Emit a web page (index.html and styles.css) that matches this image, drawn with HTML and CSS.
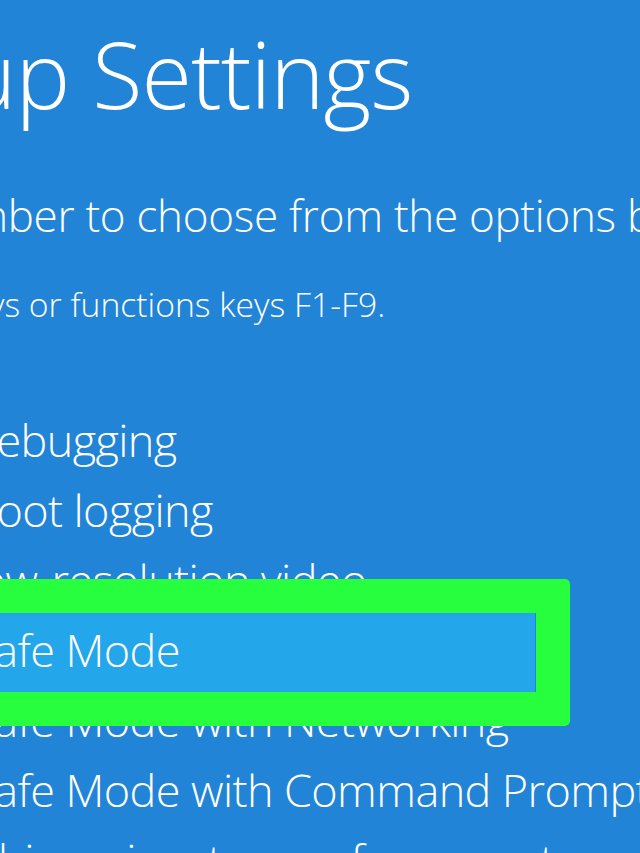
FILE: index.html
```html
<!DOCTYPE html>
<html lang="en">
<head>
  <meta charset="UTF-8" />
  <meta name="viewport" content="width=device-width, initial-scale=1.0" />
  <title>Startup Settings</title>
  <link rel="stylesheet" href="styles.css">
</head>
<body>
  <div class="screen">
    <h1 class="title">Startup Settings</h1>
    <p class="prompt">Press a number to choose from the options below:</p>
    <p class="hint">Use number keys or functions keys F1-F9.</p>
    <ol class="options">
      <li>1) Enable debugging</li>
      <li>2) Enable boot logging</li>
      <li>3) Enable low-resolution video</li>
      <li class="selected">4) Enable Safe Mode</li>
      <li>5) Enable Safe Mode with Networking</li>
      <li>6) Enable Safe Mode with Command Prompt</li>
      <li>7) Disable driver signature enforcement</li>
    </ol>
  </div>
</body>
</html>
```

FILE: styles.css
```css
html, body {
  margin: 0;
  height: 100%;
  overflow: hidden;
}
body {
  background: #2184d6;
  color: #fff;
  font-family: "Open Sans", "Noto Sans", sans-serif;
  font-weight: 300;
}
.screen {
  white-space: nowrap;
}
.title {
  font-size: 92px;
  line-height: 92px;
  font-weight: 300;
  letter-spacing: -1px;
  margin: 28px 0 0 -229px;
}
.prompt {
  font-size: 44px;
  line-height: 44px;
  letter-spacing: -0.3px;
  margin: 73px 0 0 -234px;
}
.hint {
  font-size: 33.7px;
  line-height: 34px;
  margin: 50px 0 0 -243px;
}
.options {
  list-style: none;
  padding: 0;
  font-size: 45px;
  line-height: 70px;
  letter-spacing: -0.6px;
  margin: 83.5px 0 0 -222px;
}
.options .selected {
  position: relative;
  background: #24a6ea;
  margin: -1.5px 105px -7.5px 0;
  padding: 1.5px 0 7.5px;
}
.options .selected::after {
  content: "";
  position: absolute;
  top: -34px;
  right: -35px;
  bottom: -34px;
  left: -40px;
  border: 34px solid #26fe3e;
  border-radius: 5px;
}
```
